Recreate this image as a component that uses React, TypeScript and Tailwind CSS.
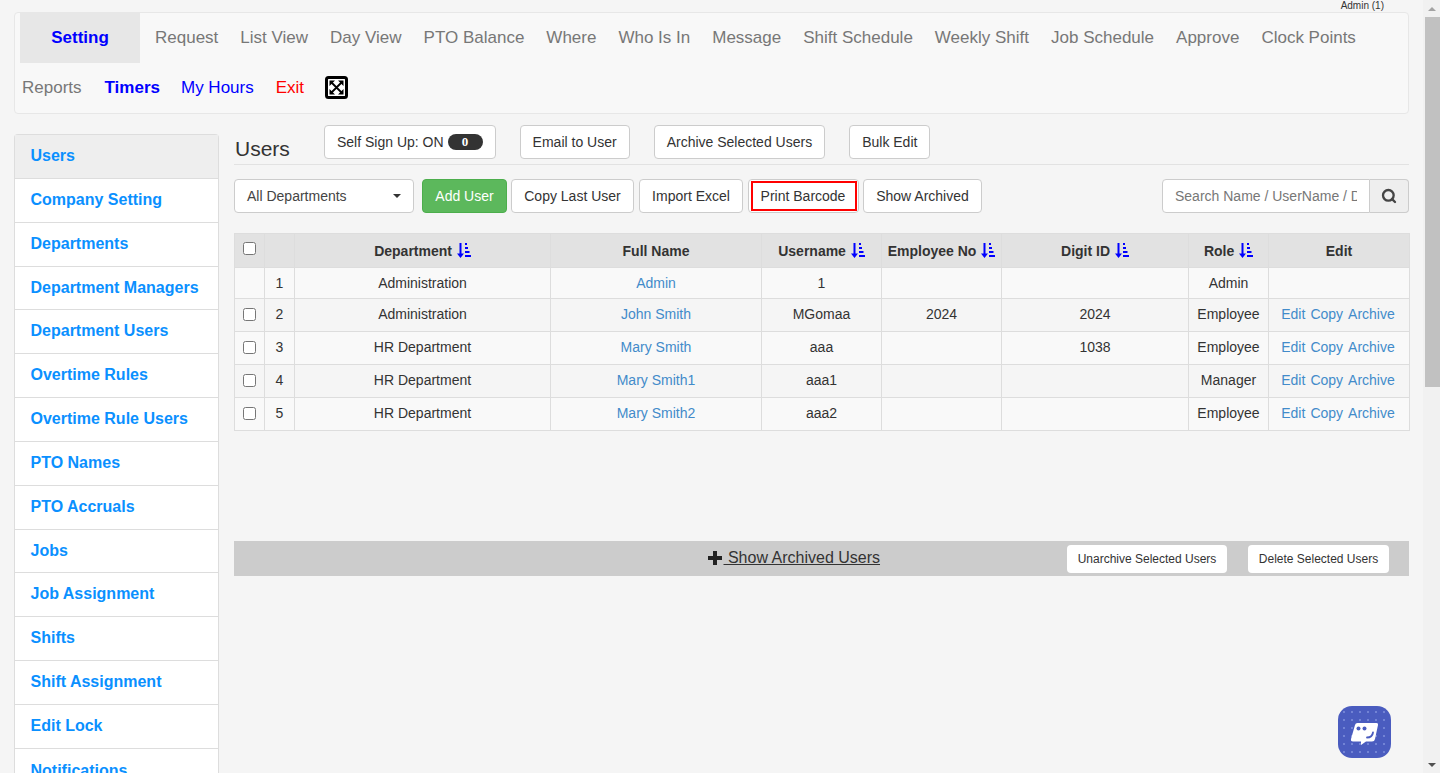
import { Search } from "lucide-react";

const sideItems = [
  "Users", "Company Setting", "Departments", "Department Managers", "Department Users",
  "Overtime Rules", "Overtime Rule Users", "PTO Names", "PTO Accruals", "Jobs",
  "Job Assignment", "Shifts", "Shift Assignment", "Edit Lock", "Notifications",
];

const navItems = [
  "Request", "List View", "Day View", "PTO Balance", "Where", "Who Is In", "Message",
  "Shift Schedule", "Weekly Shift", "Job Schedule", "Approve", "Clock Points",
];

const rows = [
  { n: 1, dept: "Administration", name: "Admin", user: "1", emp: "", digit: "", role: "Admin", edit: false },
  { n: 2, dept: "Administration", name: "John Smith", user: "MGomaa", emp: "2024", digit: "2024", role: "Employee", edit: true },
  { n: 3, dept: "HR Department", name: "Mary Smith", user: "aaa", emp: "", digit: "1038", role: "Employee", edit: true },
  { n: 4, dept: "HR Department", name: "Mary Smith1", user: "aaa1", emp: "", digit: "", role: "Manager", edit: true },
  { n: 5, dept: "HR Department", name: "Mary Smith2", user: "aaa2", emp: "", digit: "", role: "Employee", edit: true },
];

const btn = "flex h-[34px] items-center rounded border border-[#ccc] bg-white px-3 text-sm text-[#333]";
const th = "border border-[#ddd] text-center align-middle font-bold text-[#333]";
const td = "border border-[#ddd] text-center align-middle text-[#333]";

function SortIcon() {
  return (
    <svg width="14" height="15" viewBox="0 0 14 15" className="ml-px inline-block align-[-2px]" fill="#0000ff">
      <path d="M2.500 0h2v10.500H7L3.500 15 0 10.500h2.500z" />
      <path d="M8 0h2v2H8zM8 4h3v2H8zM8 8h4.500v2H8zM8 12h6v2H8z" />
    </svg>
  );
}

function FullscreenIcon() {
  return (
    <svg width="23" height="23" viewBox="0 0 23 23" className="-ml-px block -translate-y-px">
      <rect x="1.500" y="1.500" width="20" height="20" rx="2" fill="#fff" stroke="#000" strokeWidth="3" />
      <path d="M6 6l11 11M17 6L6 17" stroke="#000" strokeWidth="1.800" />
      <path d="M4.500 4.500h5.500l-5.500 5.500zM18.500 4.500v5.500l-5.500-5.500zM4.500 18.500v-5.500l5.500 5.500zM18.500 18.500h-5.500l5.500-5.500z" fill="#000" />
    </svg>
  );
}

function ChatWidget() {
  const dots = [];
  for (let y = 6; y < 52; y += 8) {
    for (let x = 6; x < 52; x += 8) {
      dots.push(<circle key={`${x}-${y}`} cx={x} cy={y} r="1" fill="#8190dc" />);
    }
  }
  return (
    <svg width="53" height="52" viewBox="0 0 53 52" className="absolute bottom-[15px] right-[49px]">
      <rect width="53" height="52" rx="14" fill="#4a5cbf" />
      {dots}
      <path d="M17 19q.5-2 2.500-2h19q2 0 1.500 2l-3 14q-.5 2.500-3 2.500h-6l-5 3.500v-3.500h-8q-2.500 0-2-2.500z" fill="#fff" />
      <circle cx="20.500" cy="22.500" r="2" fill="#4a5cbf" />
      <circle cx="26.500" cy="22.500" r="2" fill="#4a5cbf" />
      <path d="M29 31.500c3 0 5.500-1.500 6-5" fill="none" stroke="#4a5cbf" strokeWidth="1.800" strokeLinecap="round" />
    </svg>
  );
}

function Scrollbar() {
  return (
    <div className="flex h-full w-[17px] shrink-0 flex-col bg-[#f1f1f1]">
      <div className="flex h-[17px] items-center justify-center">
        <div className="h-0 w-0 border-x-[4px] border-b-[4px] border-x-transparent border-b-[#a3a3a3]" />
      </div>
      <div className="ml-[2px] h-[370px] w-[15px] bg-[#c1c1c1]" />
      <div className="flex-1" />
      <div className="flex h-[17px] items-center justify-center">
        <div className="h-0 w-0 border-x-[4px] border-t-[4px] border-x-transparent border-t-[#505050]" />
      </div>
    </div>
  );
}

export default function App() {
  return (
    <div className="relative flex h-[773px] overflow-hidden bg-[#f5f5f5] font-['Liberation_Sans',Arial,sans-serif] text-sm text-[#333]">
      <div className="min-w-0 flex-1 pl-[14px] pr-[14px]">
        <div className="flex h-[12px] justify-end pr-[25px] text-[10px] leading-[12px] text-[#333]">Admin (1)</div>

        <nav className="h-[102px] rounded border border-[#e7e7e7] bg-[#f8f8f8] pl-[5px] text-[17px]">
          <div className="flex h-[50px] items-center">
            <a className="mr-[15px] flex h-[50px] w-[120px] items-center justify-center bg-[#e7e7e7] font-bold text-[#0000ff]">Setting</a>
            <div className="flex gap-[22px] text-[#777]">
              {navItems.map((item) => (
                <a key={item}>{item}</a>
              ))}
            </div>
          </div>
          <div className="flex h-[50px] items-center gap-[22px] pl-[2px]">
            <a className="text-[#777]">Reports</a>
            <a className="ml-px font-bold text-[#0000ff]">Timers</a>
            <a className="-ml-px text-[#0000ff]">My Hours</a>
            <a className="text-[#ff0000]">Exit</a>
            <FullscreenIcon />
          </div>
        </nav>

        <div className="mt-[20px] flex gap-[15px]">
          <aside className="w-[205px] shrink-0">
            <ul className="rounded-t border-x border-t border-[#ddd] bg-white">
              {sideItems.map((item, i) => (
                <li
                  key={item}
                  className={`flex items-center border-b border-[#ddd] pl-[15.500px] text-base font-bold text-[#0a90ff] ${i === 3 || i === 9 ? "h-[43px]" : "h-[44px]"} ${i === 3 || i === 9 || i === 14 ? "" : "pb-[2px]"} ${i === 0 ? "bg-[#eee]" : ""}`}
                >
                  {item}
                </li>
              ))}
            </ul>
          </aside>

          <main className="min-w-0 flex-1">
            <div className="-mt-[9px] flex h-[40px] border-b border-[#e2e2e2]">
              <h1 className="ml-px mt-[10px] w-[89px] text-[21px] leading-[27px] text-[#333]">Users</h1>
              <div className="flex h-[34px] gap-6">
                <button className={btn}>
                  Self Sign Up: ON
                  <span className="ml-1 flex h-[16px] w-[35px] items-center justify-center rounded-full bg-[#333] font-['Liberation_Serif',serif] text-[13px] font-bold text-white">0</span>
                </button>
                <button className={btn}>Email to User</button>
                <button className={btn}>Archive Selected Users</button>
                <button className={btn}>Bulk Edit</button>
              </div>
            </div>

            <div className="mt-[14px] flex h-[34px] items-center">
              <div className="flex h-[34px] w-[180px] items-center justify-between rounded border border-[#ccc] bg-white pl-3 pr-[12px] text-sm text-[#444]">
                All Departments
                <div className="h-0 w-0 border-x-[4px] border-t-[4px] border-x-transparent border-t-[#333]" />
              </div>
              <button className="ml-2 flex h-[34px] w-[85px] items-center justify-center rounded border border-[#4cae4c] bg-[#5cb85c] text-sm text-white">Add User</button>
              <button className={`${btn} ml-1 w-[123px] justify-center px-0`}>Copy Last User</button>
              <button className={`${btn} ml-[5px] w-[104px] justify-center px-0`}>Import Excel</button>
              <button className="ml-[5px] flex h-[34px] w-[111px] items-center rounded border border-[#ccc] bg-white pl-[2px] text-sm text-[#333]">
                <span className="flex h-[30px] w-[106px] items-center justify-center border-2 border-[#f00] pr-[2px]">Print Barcode</span>
              </button>
              <button className={`${btn} ml-1 w-[119px] justify-center px-0`}>Show Archived</button>
              <div className="ml-auto flex h-[34px] w-[247px]">
                <input
                  placeholder="Search Name / UserName / Digit ID"
                  className="w-[208px] rounded-l border border-[#ccc] bg-white px-3 text-sm text-[#555] placeholder:text-[#777]"
                />
                <div className="flex w-[39px] items-center justify-center rounded-r border border-l-0 border-[#ccc] bg-[#eee]">
                  <Search size={16} strokeWidth={3.500} className="text-[#444]" />
                </div>
              </div>
            </div>

            <table className="mt-[20px] w-full table-fixed border-collapse text-sm">
              <colgroup>
                <col className="w-[30px]" />
                <col className="w-[30px]" />
                <col className="w-[256px]" />
                <col className="w-[211px]" />
                <col className="w-[120px]" />
                <col className="w-[120px]" />
                <col className="w-[187px]" />
                <col className="w-[80px]" />
                <col className="w-[141px]" />
              </colgroup>
              <thead>
                <tr className="h-[34px] bg-[#e2e2e2]">
                  <th className={th}><input type="checkbox" className="mx-auto block h-[13px] w-[13px] -translate-y-[2px]" /></th>
                  <th className={th}></th>
                  <th className={th}>Department <SortIcon /></th>
                  <th className={th}>Full Name</th>
                  <th className={th}>Username <SortIcon /></th>
                  <th className={th}>Employee No <SortIcon /></th>
                  <th className={th}>Digit ID <SortIcon /></th>
                  <th className={th}>Role <SortIcon /></th>
                  <th className={th}>Edit</th>
                </tr>
              </thead>
              <tbody>
                {rows.map((r) => (
                  <tr key={r.n} className={`${r.n === 1 ? "h-[31px]" : "h-[33px] [&>td]:pb-[2px]"} ${r.n % 2 === 1 ? "bg-[#f9f9f9]" : "bg-[#f5f5f5]"}`}>
                    <td className={td}>
                      {r.edit && <input type="checkbox" className="mx-auto block h-[13px] w-[13px]" />}
                    </td>
                    <td className={td}>{r.n}</td>
                    <td className={td}>{r.dept}</td>
                    <td className={`${td} text-[#428bca]`}>{r.name}</td>
                    <td className={td}>{r.user}</td>
                    <td className={td}>{r.emp}</td>
                    <td className={td}>{r.digit}</td>
                    <td className={td}>{r.role}</td>
                    <td className={td}>
                      {r.edit && (
                        <span className="flex justify-center gap-[5px] pr-[2px] text-[#428bca]">
                          <a>Edit</a>
                          <a>Copy</a>
                          <a>Archive</a>
                        </span>
                      )}
                    </td>
                  </tr>
                ))}
              </tbody>
            </table>

            <div className="mt-[110px] flex h-[35px] items-center bg-[#ccc] pl-[474px] pr-[20px]">
              <a className="flex -translate-y-px items-center text-base text-[#333] underline">
                <svg width="14" height="14" viewBox="0 0 14 14" fill="#222" className="block">
                  <path d="M5 0h4v5h5v4H9v5H5V9H0V5h5z" />
                </svg>
                <span className="ml-[1.500px] whitespace-pre"> Show Archived Users</span>
              </a>
              <button className="ml-auto flex h-[28px] w-[160px] items-center justify-center rounded-sm bg-white text-xs text-[#333]">Unarchive Selected Users</button>
              <button className="ml-[21px] flex h-[28px] w-[141px] items-center justify-center rounded-sm bg-white text-xs text-[#333]">Delete Selected Users</button>
            </div>
          </main>
        </div>
      </div>
      <Scrollbar />
      <ChatWidget />
    </div>
  );
}
